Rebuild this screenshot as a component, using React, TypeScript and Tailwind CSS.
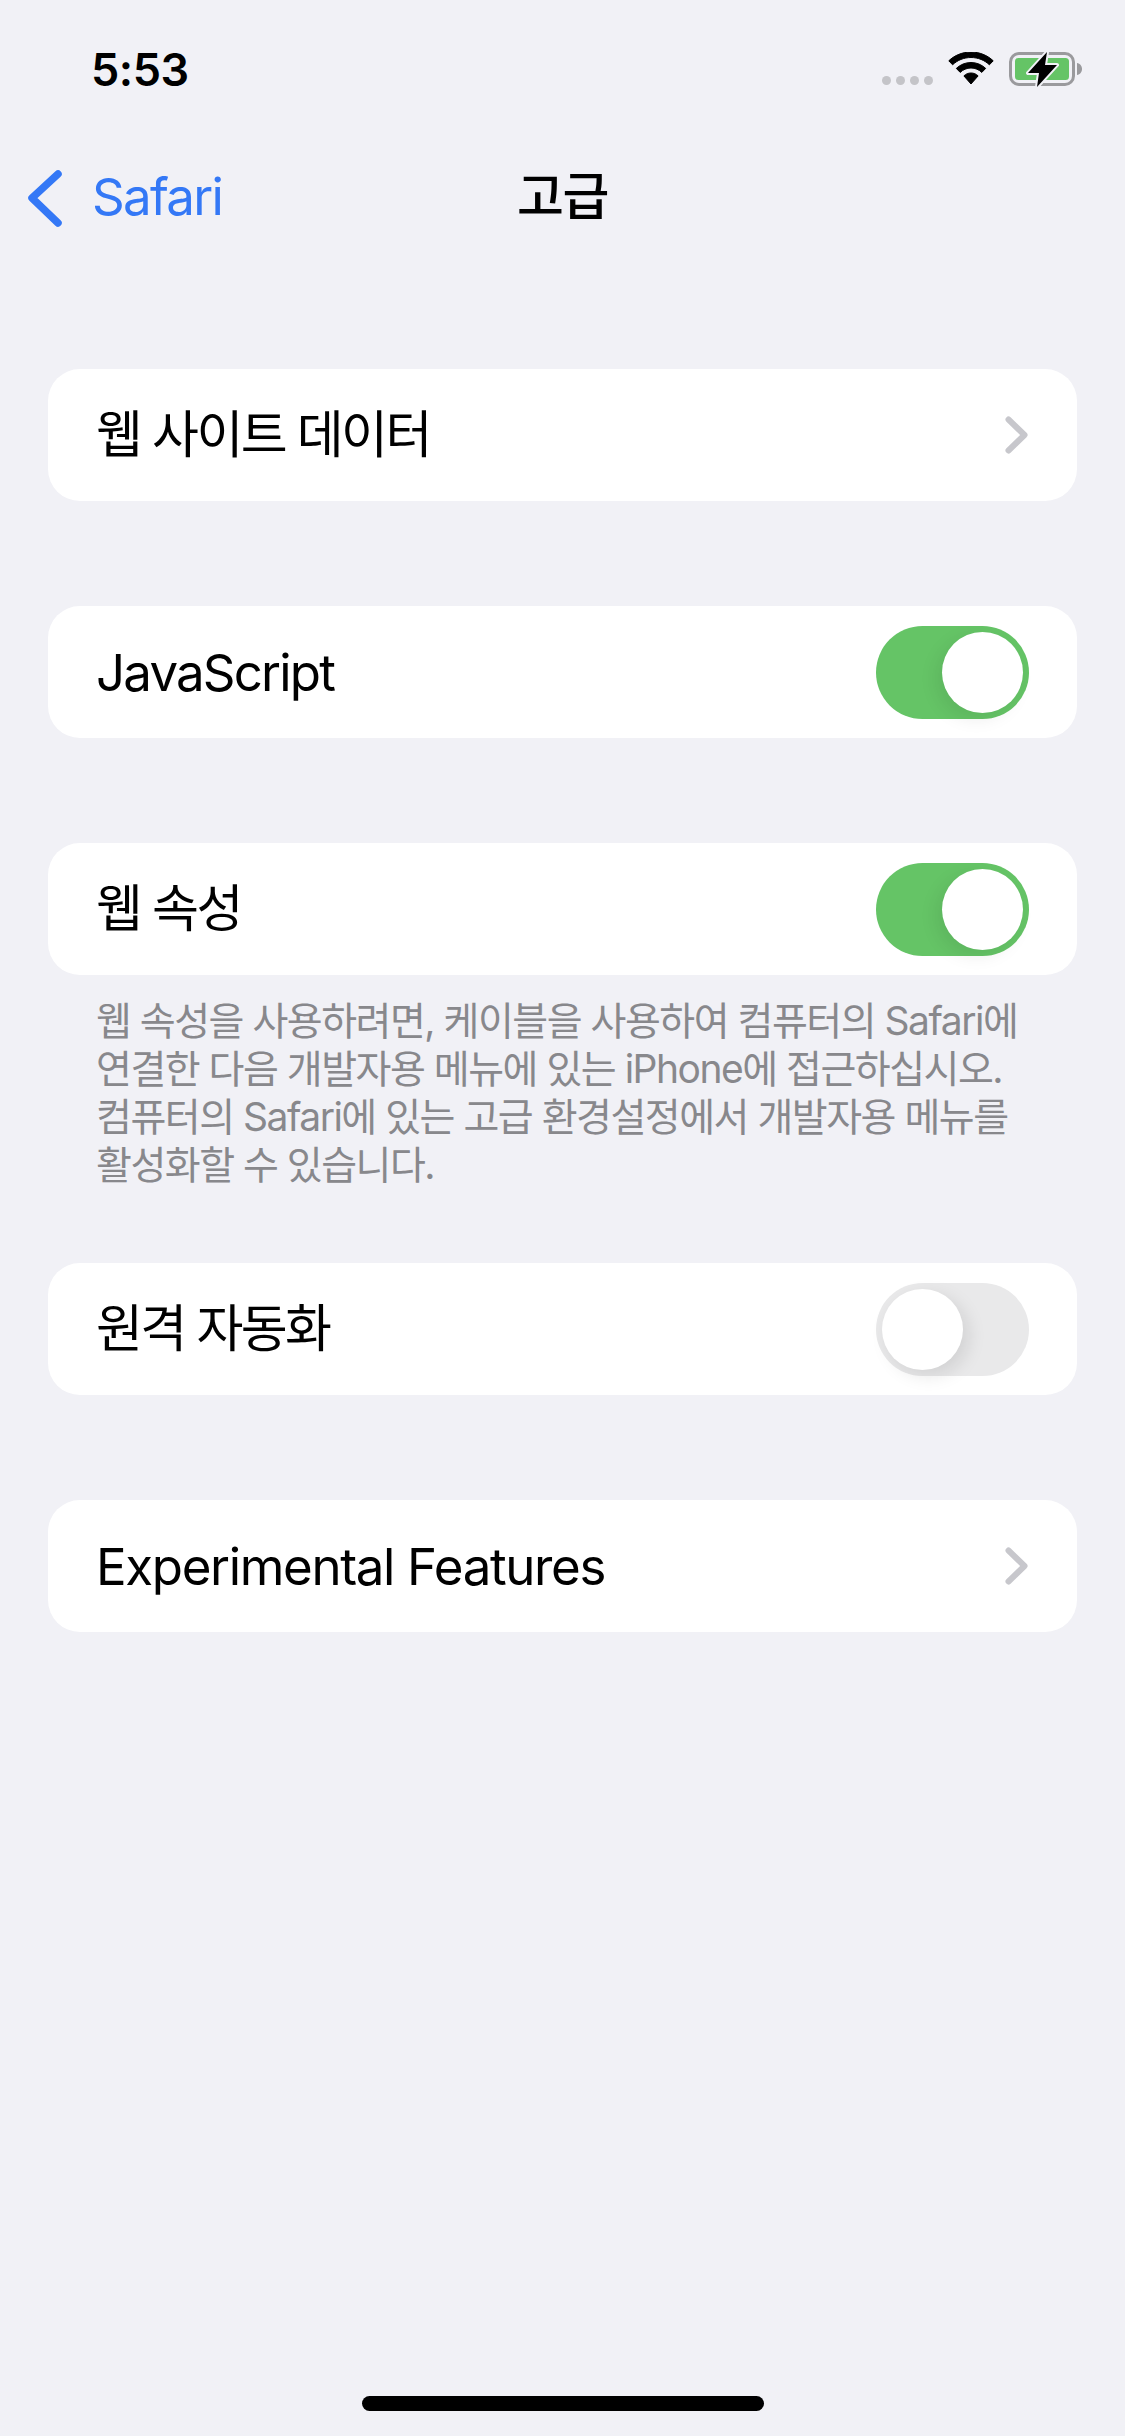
import React from "react";

const FONT = "font-['Inter','Noto_Sans_CJK_KR',sans-serif]";

function Chevron() {
  return (
    <svg width="24" height="40" viewBox="0 0 24 40" className="block">
      <path d="M3.5 4.5 L19.5 20 L3.5 35.5" fill="none" stroke="#c7c7cc" strokeWidth="6" strokeLinecap="round" strokeLinejoin="round" />
    </svg>
  );
}

function Toggle({ on }: { on: boolean }) {
  return (
    <div className={`flex h-[93px] w-[153px] items-center rounded-full p-[6px] ${on ? "justify-end bg-[#65c466]" : "justify-start bg-[#e9e9ea]"}`}>
      <div className={`h-[81px] w-[81px] rounded-full bg-white ${on ? "shadow-[-6px_6px_18px_rgba(0,0,0,0.08)]" : "shadow-[6px_6px_18px_rgba(0,0,0,0.10)]"}`} />
    </div>
  );
}

function Row({ label, right, className, track }: { label: string; right: React.ReactNode; className: string; track: string }) {
  return (
    <div className={`mx-[48px] flex h-[132px] items-center justify-between rounded-[32px] bg-white pl-[48px] ${className}`}>
      <span className={`text-[51px] leading-[60px] text-black ${track}`}>{label}</span>
      {right}
    </div>
  );
}

export default function App() {
  return (
    <div className={`flex h-[2436px] w-[1125px] flex-col overflow-hidden bg-[#f1f1f6] ${FONT}`}>
      <div className="flex h-[132px] items-start justify-between pl-[91px] pr-[43px]">
        <span className="mt-[43px] text-[45px] font-semibold leading-[54px] tracking-[-0.5px] text-black">5:53</span>
        <div className="mt-[50px] flex items-start">
          <div className="mt-[26px] flex gap-[5px]">
            <div className="h-[9px] w-[9px] rounded-full bg-[#c4c4c8]" />
            <div className="h-[9px] w-[9px] rounded-full bg-[#c4c4c8]" />
            <div className="h-[9px] w-[9px] rounded-full bg-[#c4c4c8]" />
            <div className="h-[9px] w-[9px] rounded-full bg-[#c4c4c8]" />
          </div>
          <svg width="46" height="34" viewBox="0 0 46 34" className="ml-[15px] mt-[2px]">
            <path d="M23 0C14.5 0 6.6 3.3 0.8 8.8L4.6 12.8C9.4 8.2 15.9 5.5 23 5.5S36.6 8.2 41.4 12.8L45.2 8.8C39.4 3.3 31.5 0 23 0Z" fill="#000" stroke="#000" strokeWidth="1" />
            <path d="M23 10.5C17.4 10.5 12.2 12.7 8.3 16.4L12.2 20.4C15 17.7 18.8 16 23 16S31 17.7 33.8 20.4L37.7 16.4C33.8 12.7 28.6 10.5 23 10.5Z" fill="#000" stroke="#000" strokeWidth="1" />
            <path d="M23 21C20.2 21 17.8 22 15.9 23.9L23 32L30.1 23.9C28.2 22 25.8 21 23 21Z" fill="#000" stroke="#000" strokeWidth="1" />
          </svg>
          <svg width="76" height="38" viewBox="0 0 76 38" className="ml-[12px]">
            <rect x="4.5" y="3.5" width="63" height="31" rx="8.5" fill="none" stroke="#9a9a9d" strokeWidth="3" />
            <rect x="9" y="8" width="54" height="22" rx="3.5" fill="#65c466" />
            <path d="M71 13 C74 13.5 76 16 76 19 S74 24.5 71 25Z" fill="#9a9a9d" />
            <path d="M41 2 L22 23 L33 23 L31 37 L51 15 L39 15 Z" fill="#000" stroke="#f1f1f6" strokeWidth="4" strokeLinejoin="round" paintOrder="stroke" />
          </svg>
        </div>
      </div>

      <div className="relative flex h-[132px] items-center">
        <svg width="40" height="62" viewBox="0 0 40 62" className="ml-[25px]">
          <path d="M33 7 L7 31 L33 56" fill="none" stroke="#3478f6" strokeWidth="7.5" strokeLinecap="round" strokeLinejoin="round" />
        </svg>
        <span className="ml-[27px] mt-[-3px] text-[51px] leading-[60px] tracking-[-1.7px] text-[#3478f6]">Safari</span>
        <span className="absolute left-0 right-0 top-[35px] text-center text-[51px] font-medium leading-[60px] tracking-[-1.4px] text-black">고급</span>
      </div>

      <Row className="mt-[105px]" track="tracking-[-2.6px]" label="웹 사이트 데이터" right={<div className="mr-[48px]"><Chevron /></div>} />
      <Row className="mt-[105px]" track="relative top-[1px] tracking-[-1.8px]" label="JavaScript" right={<div className="mr-[48px]"><Toggle on /></div>} />
      <Row className="mt-[105px]" track="tracking-[-2.6px]" label="웹 속성" right={<div className="mr-[48px]"><Toggle on /></div>} />
      <p className="mb-[73px] mt-[22px] h-[193px] whitespace-nowrap px-[96px] text-[39px] leading-[48px] tracking-[-1.5px] text-[#88888c]">
        웹 속성을 사용하려면, 케이블을 사용하여 컴퓨터의 Safari에<br />
        연결한 다음 개발자용 메뉴에 있는 iPhone에 접근하십시오.<br />
        컴퓨터의 Safari에 있는 고급 환경설정에서 개발자용 메뉴를<br />
        활성화할 수 있습니다.
      </p>
      <Row className="" track="tracking-[-2.6px]" label="원격 자동화" right={<div className="mr-[48px]"><Toggle on={false} /></div>} />
      <Row className="mt-[105px]" track="relative top-[1px] tracking-[-1.35px]" label="Experimental Features" right={<div className="mr-[48px]"><Chevron /></div>} />

      <div className="mb-[25px] mt-auto h-[15px] w-[402px] self-center rounded-full bg-black" />
    </div>
  );
}
